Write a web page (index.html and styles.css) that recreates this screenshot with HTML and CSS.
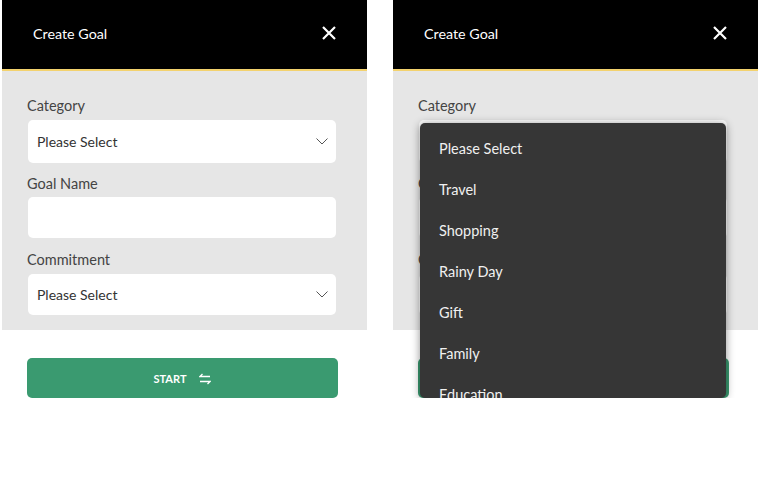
FILE: index.html
```html
<!DOCTYPE html>
<html lang="en">
<head>
  <meta charset="UTF-8" />
  <title>Create Goal</title>
  <link rel="stylesheet" href="styles.css">
</head>
<body>

  <section class="screen">
    <header class="top-bar">
      <h1>Create Goal</h1>
      <svg class="close-icon" viewBox="0 0 14 14"><path d="M1 1L13 13M13 1L1 13" /></svg>
    </header>
    <div class="form-panel">
      <label class="field-label">Category</label>
      <div class="field field-first">Please Select
        <svg class="chevron" viewBox="0 0 12 7"><path d="M.5.5L6 6 11.5.5" /></svg>
      </div>
      <label class="field-label">Goal Name</label>
      <div class="field field-text"></div>
      <label class="field-label">Commitment</label>
      <div class="field">Please Select
        <svg class="chevron" viewBox="0 0 12 7"><path d="M.5.5L6 6 11.5.5" /></svg>
      </div>
    </div>
    <button class="start-btn">START
      <svg class="swap-icon" viewBox="0 0 12 12"><path d="M3.5 1L1 3.5H11M8.5 11L11 8.5H1" /></svg>
    </button>
  </section>

  <section class="screen">
    <header class="top-bar">
      <h1>Create Goal</h1>
      <svg class="close-icon" viewBox="0 0 14 14"><path d="M1 1L13 13M13 1L1 13" /></svg>
    </header>
    <div class="form-panel">
      <label class="field-label">Category</label>
      <div class="field field-first">Please Select</div>
      <label class="field-label">Goal Name</label>
      <div class="field field-text"></div>
      <label class="field-label">Commitment</label>
      <div class="field">Please Select</div>
    </div>
    <button class="start-btn">START</button>

    <ul class="dropdown">
      <li>Please Select</li>
      <li>Travel</li>
      <li>Shopping</li>
      <li>Rainy Day</li>
      <li>Gift</li>
      <li>Family</li>
      <li>Education</li>
    </ul>
  </section>

</body>
</html>
```

FILE: styles.css
```css
body {
  font-family: Lato, "Open Sans", sans-serif;
  margin: 0;
  padding: 0 0 0 2px;
  background: #fff;
  color: #333;
  display: flex;
  gap: 26px;
}
.screen {
  position: relative;
  width: 365px;
}
.top-bar {
  height: 71px;
  box-sizing: border-box;
  background: #000;
  border-bottom: 2px solid #f3d26e;
  display: flex;
  align-items: center;
  justify-content: space-between;
  padding: 0 31px 3px 31px;
}
.top-bar h1 {
  margin: 0;
  font-size: 14.3px;
  font-weight: 400;
  color: #fff;
}
.close-icon {
  width: 14px;
  height: 14px;
  fill: none;
  stroke: #fff;
  stroke-width: 2.2;
}
.form-panel {
  background: #e6e6e6;
  height: 259px;
  box-sizing: border-box;
  padding: 26px 31px 0 25px;
}
.field-label {
  display: block;
  font-size: 14.5px;
  line-height: 18px;
  color: #444;
}
.field {
  height: 41px;
  margin: 5px 0 13px 1px;
  padding: 0 8px 0 9px;
  background: #fff;
  border-radius: 5px;
  display: flex;
  align-items: center;
  justify-content: space-between;
  font-size: 14px;
  color: #333;
}
.field-first {
  height: 43px;
  margin-bottom: 12px;
}
.field-text {
  margin-top: 4px;
}
.chevron {
  width: 12px;
  height: 7px;
  fill: none;
  stroke: #555;
  stroke-width: 1;
}
.start-btn {
  display: flex;
  align-items: center;
  justify-content: center;
  gap: 13px;
  width: 311px;
  height: 40px;
  margin: 28px 0 0 25px;
  border: none;
  border-radius: 5px;
  background: #3a9a70;
  color: #fff;
  font-family: inherit;
  font-size: 11px;
  font-weight: 700;
}
.swap-icon {
  width: 12px;
  height: 12px;
  margin-top: 2px;
  fill: none;
  stroke: #fff;
  stroke-width: 1.3;
}
.dropdown {
  position: absolute;
  left: 27px;
  top: 123px;
  width: 306px;
  height: 275px;
  box-sizing: border-box;
  margin: 0;
  padding: 5px 0 0 19px;
  list-style: none;
  overflow: hidden;
  background: #363636;
  border-radius: 5px;
  box-shadow: 0 1px 8px rgba(0,0,0,0.45);
  color: #f0f0f0;
  font-size: 14.5px;
}
.dropdown li {
  height: 41px;
  line-height: 41px;
}
```
